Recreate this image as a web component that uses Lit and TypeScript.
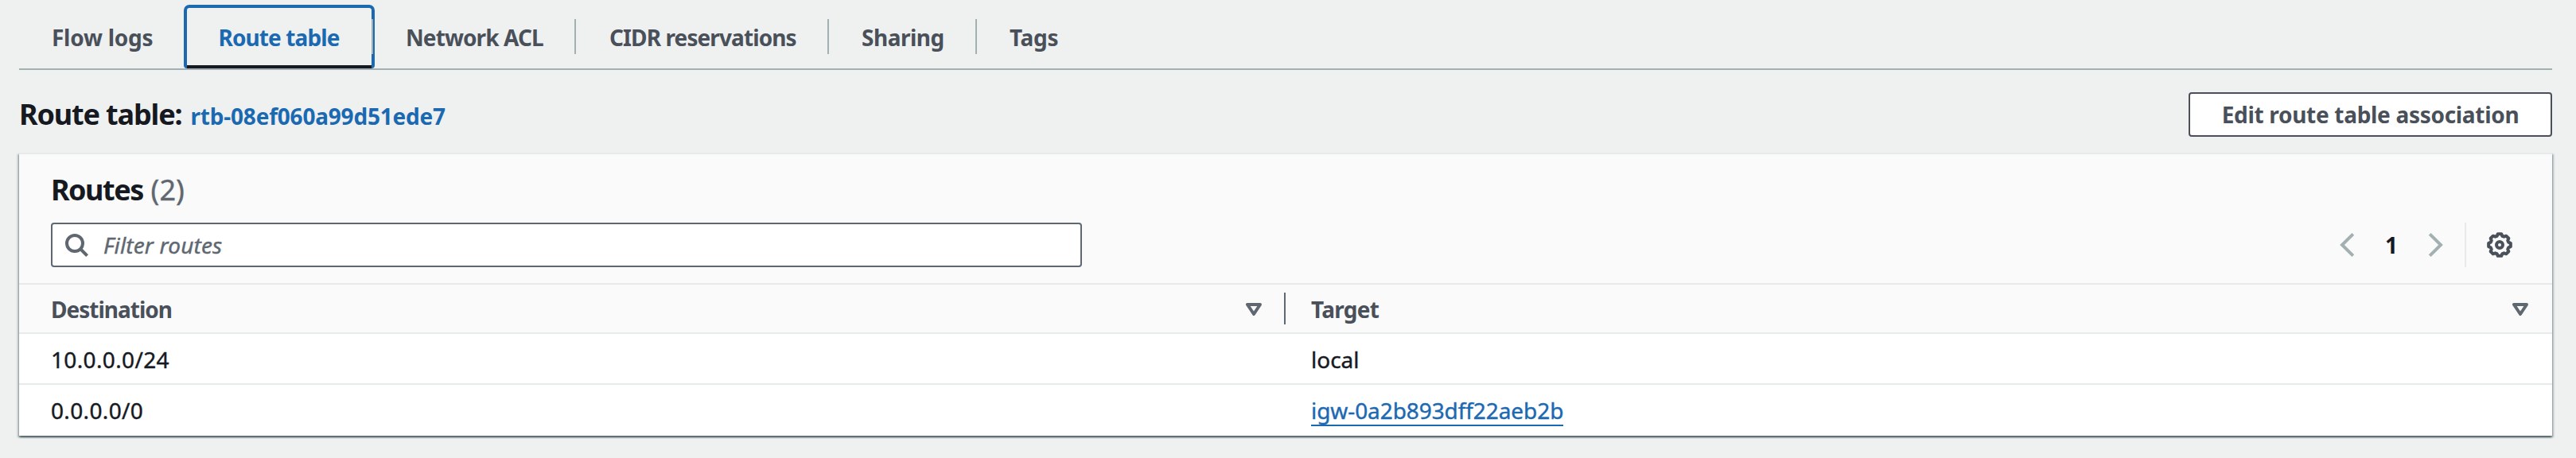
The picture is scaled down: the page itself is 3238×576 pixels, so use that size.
import { LitElement, html, css, svg } from 'lit';
import { customElement, property } from 'lit/decorators.js';
import { classMap } from 'lit/directives/class-map.js';

interface Tab {
  label: string;
  key: string;
  active?: boolean;
}

interface Route {
  destination: string;
  target: string;
  link?: boolean;
}

const TABS: Tab[] = [
  { label: 'Flow logs', key: 'flow' },
  { label: 'Route table', key: 'route', active: true },
  { label: 'Network ACL', key: 'acl' },
  { label: 'CIDR reservations', key: 'cidr' },
  { label: 'Sharing', key: 'sharing' },
  { label: 'Tags', key: 'tags' },
];

const ROUTES: Route[] = [
  { destination: '10.0.0.0/24', target: 'local' },
  { destination: '0.0.0.0/0', target: 'igw-0a2b893dff22aeb2b', link: true },
];

/** Outline of the settings cog: eight flat teeth with shallow valleys. */
const cogPoints = Array.from({ length: 8 }, (_, i) =>
  [
    [-9, 14],
    [9, 14],
    [17, 11.6],
    [28, 11.6],
  ]
    .map(([deg, r]) => {
      const a = ((i * 45 + deg - 90) * Math.PI) / 180;
      return `${(16 + r * Math.cos(a)).toFixed(2)},${(16 + r * Math.sin(a)).toFixed(2)}`;
    })
    .join(' ')
).join(' ');

const ICONS = {
  search: {
    size: [32, 32],
    body: svg`<circle cx="14" cy="14" r="10"/><path d="M21 21 29.6 29.6"/>`,
  },
  sort: { size: [20, 16], body: svg`<path d="M2 2H18L10 14Z" stroke-linejoin="round"/>` },
  prev: { size: [20, 32], body: svg`<path d="M17.8 2.4 4 16 17.8 29.6" stroke-width="4"/>` },
  next: { size: [20, 32], body: svg`<path d="M2.2 2.4 16 16 2.2 29.6" stroke-width="4"/>` },
  cog: {
    size: [32, 32],
    body: svg`<polygon points=${cogPoints} stroke-linejoin="round"/><circle cx="16" cy="16" r="4"/>`,
  },
};

@customElement('ui-icon')
export class UiIcon extends LitElement {
  static styles = css`
    :host {
      display: block;
      flex: none;
    }
    svg {
      display: block;
      fill: none;
      stroke: currentColor;
      stroke-width: 4;
    }
  `;

  @property() name: keyof typeof ICONS = 'search';

  render() {
    const { size, body } = ICONS[this.name];
    return html`<svg width=${size[0]} height=${size[1]} viewBox="0 0 ${size[0]} ${size[1]}">${body}</svg>`;
  }
}

@customElement('tab-bar')
export class TabBar extends LitElement {
  static styles = css`
    :host {
      display: flex;
      height: 80px;
      padding-top: 6px;
      border-bottom: 2px solid #a2b0b1;
      font-weight: 700;
      color: #49505a;
    }
    .tab {
      position: relative;
      box-sizing: border-box;
      padding-left: 41px;
      line-height: 82px;
      height: 80px;
      white-space: nowrap;
    }
    .tab::after {
      content: '';
      position: absolute;
      z-index: 1;
      right: 0;
      top: 18px;
      width: 2px;
      height: 44px;
      background: #a2b0b1;
    }
    .flow::after,
    .tags::after {
      display: none;
    }
    .flow {
      width: 211px;
      letter-spacing: -0.25px;
    }
    .route {
      width: 234px;
      padding-left: 39.5px;
      letter-spacing: -0.9px;
    }
    .acl {
      width: 255px;
      letter-spacing: -0.9px;
    }
    .cidr {
      width: 318px;
      padding-left: 42px;
      letter-spacing: -0.9px;
    }
    .sharing {
      width: 186px;
      letter-spacing: -0.5px;
    }
    .tags {
      letter-spacing: -0.3px;
    }
    .active {
      color: #1b69b1;
    }
    .active::before {
      content: '';
      position: absolute;
      inset: 0 -2px 0 -4px;
      border: 4px solid #1b69b1;
      border-bottom: 0;
      border-radius: 7px 7px 4px 4px;
    }
    .underline {
      position: absolute;
      left: 0;
      right: 2px;
      bottom: 0;
      height: 4px;
      background: #16191f;
    }
  `;

  render() {
    return html`${TABS.map(
      (t) => html`<div class=${classMap({ tab: true, [t.key]: true, active: !!t.active })}>
        ${t.label}${t.active ? html`<span class="underline"></span>` : null}
      </div>`
    )}`;
  }
}

@customElement('routes-card')
export class RoutesCard extends LitElement {
  static styles = css`
    :host {
      display: block;
      background: #fff;
      border-top: 2px solid #e6eae9;
      box-shadow: 0 2px 2px 0 rgba(0, 28, 36, 0.5), 2px 2px 2px 0 rgba(0, 28, 36, 0.22),
        -2px 2px 2px 0 rgba(0, 28, 36, 0.22);
      color: #16191f;
    }
    .header {
      background: #fafafa;
      height: 162px;
      box-sizing: content-box;
      padding: 0 40px;
      border-bottom: 2px solid #e6eae9;
    }
    .title {
      margin: 0;
      padding-top: 21px;
      height: 66px;
      box-sizing: border-box;
      font-size: 36px;
      line-height: 48px;
      font-weight: 700;
      letter-spacing: -1.5px;
    }
    .count {
      font-weight: 400;
      -webkit-text-stroke: 0.4px;
      color: #5f6871;
      letter-spacing: 0;
      margin-left: 2px;
    }
    .tools {
      display: flex;
      align-items: center;
      justify-content: space-between;
      margin-top: 20px;
    }
    .search {
      box-sizing: border-box;
      width: 1296px;
      height: 56px;
      display: flex;
      align-items: center;
      gap: 18px;
      padding-left: 14px;
      border: 2px solid #5f6871;
      border-radius: 4px;
      background: #fff;
      color: #5f6871;
      font-style: italic;
      -webkit-text-stroke: 0.4px;
      letter-spacing: 0.15px;
    }
    .pager {
      display: flex;
      align-items: center;
      height: 56px;
      padding-right: 10px;
    }
    .arrow {
      color: #a2b0b1;
    }
    .page {
      width: 92px;
      text-align: center;
      font-weight: 700;
    }
    .rule {
      width: 2px;
      height: 56px;
      margin: 0 26px;
      background: #e6eae9;
    }
    .cog {
      color: #49505a;
    }
    .row {
      display: grid;
      grid-template-columns: 1592px 1fr;
      height: 64px;
      line-height: 64px;
      -webkit-text-stroke: 0.4px;
    }
    .row + .row {
      border-top: 2px solid #e6eae9;
    }
    .first {
      height: 62px;
    }
    .cell {
      display: flex;
      align-items: center;
      padding-left: 40px;
    }
    .target {
      padding-left: 32px;
    }
    .head {
      height: 60px;
      line-height: 60px;
      background: #fafafa;
      border-bottom: 2px solid #e6eae9;
      font-weight: 700;
      -webkit-text-stroke: 0;
      color: #49505a;
      letter-spacing: -1px;
    }
    .head .cell {
      justify-content: space-between;
      padding-right: 30px;
      position: relative;
    }
    .head .cell span {
      padding-top: 1px;
    }
    .head .split::after {
      content: '';
      position: absolute;
      right: 0;
      top: 10px;
      width: 2px;
      height: 40px;
      background: #5f6871;
    }
    .head .target {
      letter-spacing: -0.7px;
    }
    .head ui-icon {
      color: #5f6871;
    }
    .ip {
      letter-spacing: 0.35px;
    }
    .link {
      display: block;
      line-height: 38px;
      height: 37px;
      border-bottom: 2px solid #1b69b1;
      margin-top: 1px;
      color: #1b69b1;
      letter-spacing: -0.08px;
    }
  `;

  render() {
    return html`
      <div class="header">
        <h2 class="title">Routes <span class="count">(2)</span></h2>
        <div class="tools">
          <div class="search"><ui-icon name="search"></ui-icon><span>Filter routes</span></div>
          <div class="pager">
            <ui-icon class="arrow" name="prev"></ui-icon>
            <span class="page">1</span>
            <ui-icon class="arrow" name="next"></ui-icon>
            <span class="rule"></span>
            <ui-icon class="cog" name="cog"></ui-icon>
          </div>
        </div>
      </div>
      <div class="row head">
        <div class="cell split"><span>Destination</span><ui-icon name="sort"></ui-icon></div>
        <div class="cell target"><span>Target</span><ui-icon name="sort"></ui-icon></div>
      </div>
      <div>
        ${ROUTES.map(
          (r, i) => html`<div class=${classMap({ row: true, first: i === 0 })}>
            <div class="cell ip">${r.destination}</div>
            <div class="cell target">
              ${r.link ? html`<span class="link">${r.target}</span>` : r.target}
            </div>
          </div>`
        )}
      </div>
    `;
  }
}

@customElement('app-root')
export class AppRoot extends LitElement {
  static styles = css`
    :host {
      display: block;
      box-sizing: border-box;
      height: 576px;
      padding: 0 30px 0 24px;
      overflow: hidden;
      background: #eff1f1;
      font-family: 'Noto Sans', 'Open Sans', sans-serif;
      font-size: 28px;
    }
    .bar {
      display: flex;
      align-items: center;
      justify-content: space-between;
      height: 56px;
      margin: 28px 0 20px;
    }
    .heading {
      display: flex;
      align-items: baseline;
      gap: 11px;
      margin: 0;
      padding-top: 1px;
      font-size: 36px;
      line-height: 48px;
      font-weight: 700;
      color: #16191f;
      letter-spacing: -1.15px;
    }
    .id {
      font-size: 28px;
      color: #1b69b1;
      letter-spacing: -0.2px;
    }
    .button {
      box-sizing: border-box;
      width: 457px;
      height: 56px;
      border: 2px solid #49505a;
      border-radius: 4px;
      background: #fff;
      color: #49505a;
      font-weight: 700;
      line-height: 53px;
      text-align: center;
      letter-spacing: -0.3px;
    }
  `;

  render() {
    return html`
      <tab-bar></tab-bar>
      <div class="bar">
        <h1 class="heading"><span>Route table:</span><span class="id">rtb-08ef060a99d51ede7</span></h1>
        <div class="button">Edit route table association</div>
      </div>
      <routes-card></routes-card>
    `;
  }
}
